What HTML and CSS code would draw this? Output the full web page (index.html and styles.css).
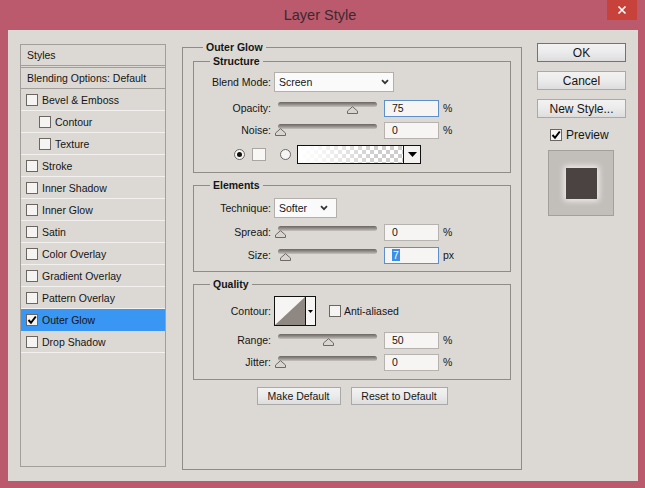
FILE: index.html
```html
<!DOCTYPE html>
<html lang="en">
<head>
<meta charset="utf-8">
<title>Layer Style</title>
<link rel="stylesheet" href="styles.css">
</head>
<body>
<div class="window">
  <div class="titlebar">
    <div class="title">Layer Style</div>
    <div class="close"><svg width="10" height="10" viewBox="0 0 10 10"><path d="M1.5 1.5 L8.5 8.5 M8.5 1.5 L1.5 8.5" stroke="#fff" stroke-width="1.6" fill="none"/></svg></div>
  </div>
  <div class="client">
    <div class="list">
      <div class="list-head">Styles</div>
      <div class="list-blend">Blending Options: Default</div>
      <div class="item"><span class="cb"></span>Bevel &amp; Emboss</div>
      <div class="item sub"><span class="cb"></span>Contour</div>
      <div class="item sub"><span class="cb"></span>Texture</div>
      <div class="item"><span class="cb"></span>Stroke</div>
      <div class="item"><span class="cb"></span>Inner Shadow</div>
      <div class="item"><span class="cb"></span>Inner Glow</div>
      <div class="item"><span class="cb"></span>Satin</div>
      <div class="item"><span class="cb"></span>Color Overlay</div>
      <div class="item"><span class="cb"></span>Gradient Overlay</div>
      <div class="item"><span class="cb"></span>Pattern Overlay</div>
      <div class="item selected"><span class="cb"><svg width="10" height="10" viewBox="0 0 10 10"><path d="M1.5 5 L4 7.8 L8.8 1.5" stroke="#000" stroke-width="2" fill="none"/></svg></span>Outer Glow</div>
      <div class="item"><span class="cb"></span>Drop Shadow</div>
    </div>

    <fieldset class="group main">
      <legend>Outer Glow</legend>

      <fieldset class="group inner structure">
        <legend>Structure</legend>
        <div class="row sel-row">
          <span class="lbl">Blend Mode:</span>
          <div class="select blend"><span>Screen</span><svg width="8" height="6" viewBox="0 0 8 6"><path d="M1 1.2 L4 4.2 L7 1.2" stroke="#333" stroke-width="1.7" fill="none"/></svg></div>
        </div>
        <div class="row sl-row r-opacity">
          <span class="lbl">Opacity:</span>
          <div class="slider"><div class="track"></div><svg class="thumb" style="left:69px" width="11" height="8" viewBox="0 0 11 8"><path d="M0.5 7.5 L0.5 5 L5.5 0.7 L10.5 5 L10.5 7.5 Z" fill="#d8d5d1" stroke="#6e6965"/></svg></div>
          <div class="field focus">75</div><span class="unit">%</span>
        </div>
        <div class="row sl-row r-noise">
          <span class="lbl">Noise:</span>
          <div class="slider"><div class="track"></div><svg class="thumb" style="left:-3px" width="11" height="8" viewBox="0 0 11 8"><path d="M0.5 7.5 L0.5 5 L5.5 0.7 L10.5 5 L10.5 7.5 Z" fill="#d8d5d1" stroke="#6e6965"/></svg></div>
          <div class="field">0</div><span class="unit">%</span>
        </div>
        <div class="row color-row">
          <span class="radio on"></span>
          <span class="swatch"></span>
          <span class="radio"></span>
          <div class="gradient"><div class="grad-fill"></div><div class="grad-arrow"><svg width="9" height="5" viewBox="0 0 9 5"><path d="M0 0 H9 L4.5 5 Z" fill="#000"/></svg></div></div>
        </div>
      </fieldset>

      <fieldset class="group inner elements">
        <legend>Elements</legend>
        <div class="row sel-row">
          <span class="lbl">Technique:</span>
          <div class="select technique"><span>Softer</span><svg width="8" height="6" viewBox="0 0 8 6"><path d="M1 1.2 L4 4.2 L7 1.2" stroke="#333" stroke-width="1.7" fill="none"/></svg></div>
        </div>
        <div class="row sl-row r-spread">
          <span class="lbl">Spread:</span>
          <div class="slider"><div class="track"></div><svg class="thumb" style="left:-3px" width="11" height="8" viewBox="0 0 11 8"><path d="M0.5 7.5 L0.5 5 L5.5 0.7 L10.5 5 L10.5 7.5 Z" fill="#d8d5d1" stroke="#6e6965"/></svg></div>
          <div class="field">0</div><span class="unit">%</span>
        </div>
        <div class="row sl-row r-size">
          <span class="lbl">Size:</span>
          <div class="slider"><div class="track"></div><svg class="thumb" style="left:2px" width="11" height="8" viewBox="0 0 11 8"><path d="M0.5 7.5 L0.5 5 L5.5 0.7 L10.5 5 L10.5 7.5 Z" fill="#d8d5d1" stroke="#6e6965"/></svg></div>
          <div class="field focus"><span class="hl">7</span></div><span class="unit">px</span>
        </div>
      </fieldset>

      <fieldset class="group inner quality">
        <legend>Quality</legend>
        <div class="row contour-row">
          <span class="lbl">Contour:</span>
          <div class="contour">
            <svg class="curve" width="30" height="28" viewBox="0 0 30 28" preserveAspectRatio="none"><rect width="30" height="28" fill="#f7f5f3"/><path d="M0 28 L30 0 L30 28 Z" fill="#8e8782"/></svg>
            <div class="contour-arrow"><svg width="5" height="3" viewBox="0 0 5 3"><path d="M0 0 H5 L2.5 3 Z" fill="#000"/></svg></div>
          </div>
          <span class="cb anti"></span><span class="anti-txt">Anti-aliased</span>
        </div>
        <div class="row sl-row r-range">
          <span class="lbl">Range:</span>
          <div class="slider"><div class="track"></div><svg class="thumb" style="left:45px" width="11" height="8" viewBox="0 0 11 8"><path d="M0.5 7.5 L0.5 5 L5.5 0.7 L10.5 5 L10.5 7.5 Z" fill="#d8d5d1" stroke="#6e6965"/></svg></div>
          <div class="field">50</div><span class="unit">%</span>
        </div>
        <div class="row sl-row r-jitter">
          <span class="lbl">Jitter:</span>
          <div class="slider"><div class="track"></div><svg class="thumb" style="left:-3px" width="11" height="8" viewBox="0 0 11 8"><path d="M0.5 7.5 L0.5 5 L5.5 0.7 L10.5 5 L10.5 7.5 Z" fill="#d8d5d1" stroke="#6e6965"/></svg></div>
          <div class="field">0</div><span class="unit">%</span>
        </div>
      </fieldset>

      <div class="defaults">
        <button class="btn make">Make Default</button>
        <button class="btn reset">Reset to Default</button>
      </div>
    </fieldset>

    <div class="side">
      <button class="btn side-btn ok">OK</button>
      <button class="btn side-btn">Cancel</button>
      <button class="btn side-btn">New Style...</button>
      <div class="preview-check"><span class="cb"><svg width="10" height="10" viewBox="0 0 10 10"><path d="M1.5 5 L4 7.8 L8.8 1.5" stroke="#000" stroke-width="2" fill="none"/></svg></span>Preview</div>
      <div class="preview"><div class="preview-sq"></div></div>
    </div>
  </div>
</div>
</body>
</html>
```

FILE: styles.css
```css
* { box-sizing: border-box; }

html, body {
  margin: 0;
  padding: 0;
}

body {
  width: 645px;
  height: 488px;
  overflow: hidden;
  background: #ba5a6c;
  font-family: "Liberation Sans", Arial, sans-serif;
  font-size: 10.5px;
  color: #151515;
}

.window {
  width: 645px;
  height: 488px;
  background: #ba5a6c;
  display: flex;
  flex-direction: column;
}

.titlebar {
  height: 30px;
  display: grid;
  grid-template-columns: 1fr auto 1fr;
  align-items: start;
  padding-right: 8px;
}

.title {
  grid-column: 2;
  font-size: 14.5px;
  line-height: 30px;
  color: #3d2830;
  padding-left: 3px;
}

.close {
  grid-column: 3;
  justify-self: end;
  width: 30px;
  height: 20px;
  background: #c7423b;
  display: flex;
  align-items: center;
  justify-content: center;
}

.close svg { display: block; }

.client {
  margin: 0 7px 0 8px;
  height: 451px;
  background: #dcd9d5;
  display: flex;
  align-items: flex-start;
  padding: 11px 0 0 12px;
}

/* ---------- left list ---------- */
.list {
  width: 146px;
  height: 423px;
  margin-top: 3px;
  border: 1px solid #a29e9a;
  flex: none;
}

.list-head {
  height: 23px;
  line-height: 20px;
  padding-left: 6px;
  border-bottom: 3px double #a29e9a;
}

.list-blend {
  height: 21px;
  line-height: 20px;
  padding-left: 6px;
  border-bottom: 1px solid #a29e9a;
}

.item {
  height: 22px;
  display: flex;
  align-items: center;
  padding-left: 5px;
  border-bottom: 1px solid #f3f1ef;
}

.item.sub { padding-left: 18px; }

.item.selected {
  background: #3a96f3;
  border-bottom-color: #3a96f3;
}

.cb {
  width: 12px;
  height: 12px;
  border: 1px solid #6b6662;
  background: #f5f4f2;
  margin-right: 4px;
  flex: none;
  display: flex;
  align-items: center;
  justify-content: center;
}

.cb svg { display: block; }

/* ---------- group boxes ---------- */
.group {
  margin: 0;
  padding: 0;
  min-width: 0;
  border: 1px solid #8f8b87;
}

.group > legend {
  font-weight: bold;
  line-height: 13px;
  padding: 0 3px;
}

.main {
  width: 340px;
  height: 429px;
  margin-left: 16px;
  padding: 0 10px;
  flex: none;
}

.main > legend { margin-left: 10px; }

.inner > legend { margin-left: 16px; }

.structure { margin-top: 1px; padding: 4px 0 8px; }
.elements { margin-top: 6px; padding: 6px 0 6px; }
.quality { margin-top: 6px; padding: 5px 0 7px; }

.row {
  display: flex;
  align-items: center;
  height: 20px;
}

.lbl {
  width: 77px;
  text-align: right;
  flex: none;
}

.select {
  margin-left: 3px;
  height: 20px;
  background: #fafafa;
  border: 1px solid #b3afab;
  display: flex;
  align-items: center;
  justify-content: space-between;
  padding: 0 4px 0 4px;
}

.select svg { display: block; }

.select.blend { width: 120px; }
.select.technique { width: 63px; padding-right: 8px; }

.slider {
  position: relative;
  width: 99px;
  height: 20px;
  margin-left: 7px;
  flex: none;
}

.track {
  margin-top: 4px;
  height: 5px;
  border-radius: 3px;
  background: linear-gradient(to bottom, #6a6561 0%, #8c8783 40%, #aca8a4 75%, #c6c2be 100%);
}

.thumb {
  position: absolute;
  top: 8px;
  display: block;
}

.field {
  margin-left: 7px;
  width: 55px;
  height: 17px;
  border: 1px solid #b6b3af;
  background: #f6f5f3;
  padding-left: 7px;
  line-height: 15px;
  flex: none;
}

.field.focus { border-color: #5d8fcd; }

.hl {
  background: #3a8fe6;
  color: #fff;
  padding: 0 1px;
}

.unit { margin-left: 4px; }

.r-opacity { margin-top: 6px; }
.r-noise { margin-top: 2px; }

.color-row {
  margin-top: 4px;
  padding-left: 40px;
}

.radio {
  width: 11px;
  height: 11px;
  border: 1px solid #6b6662;
  border-radius: 50%;
  background: #f7f6f4;
  flex: none;
  display: flex;
  align-items: center;
  justify-content: center;
}

.radio.on::after {
  content: "";
  width: 5px;
  height: 5px;
  border-radius: 50%;
  background: #111;
}

.swatch {
  width: 14px;
  height: 13px;
  margin: 0 14px 0 7px;
  border: 1px solid #a9a5a1;
  background: #f8f7f5;
  flex: none;
}

.gradient {
  margin-left: 6px;
  width: 124px;
  height: 19px;
  border: 1px solid #111;
  display: flex;
  flex: none;
}

.grad-fill {
  flex: 1;
  background:
    linear-gradient(to right, #ffffff 0%, rgba(255,255,255,0.85) 20%, rgba(255,255,255,0) 75%),
    repeating-conic-gradient(#cfcdcb 0 25%, #ffffff 0 50%) 0 0 / 8px 8px;
}

.grad-arrow {
  width: 17px;
  border-left: 1px solid #111;
  background: #f3f2f0;
  display: flex;
  align-items: center;
  justify-content: center;
}

.grad-arrow svg, .contour-arrow svg { display: block; }

.r-spread { margin-top: 4px; }
.r-size { margin-top: 3px; }

.contour-row { height: 30px; }

.contour {
  margin-left: 3px;
  width: 42px;
  height: 30px;
  border: 1px solid #111;
  display: flex;
  flex: none;
  background: #f7f5f3;
}

.curve {
  display: block;
  width: 30px;
  height: 28px;
}

.contour-arrow {
  flex: 1;
  border-left: 1px solid #111;
  display: flex;
  align-items: center;
  justify-content: center;
}

.cb.anti {
  margin-left: 13px;
  margin-right: 3px;
}

.r-range { margin-top: 4px; }
.r-jitter { margin-top: 2px; }

/* ---------- buttons ---------- */
.btn {
  font-family: "Liberation Sans", Arial, sans-serif;
  font-size: 10.5px;
  color: #151515;
  height: 18px;
  padding: 0;
  border: 1px solid #a9a9a9;
  border-radius: 0;
  background: linear-gradient(to bottom, #f2f2f2 0%, #ebebeb 50%, #dddddd 100%);
}

.defaults {
  display: flex;
  justify-content: center;
  gap: 10px;
  margin-top: 7px;
}

.btn.make { width: 84px; }
.btn.reset { width: 97px; }

.side {
  margin-left: 15px;
  margin-top: 2px;
  width: 89px;
  display: flex;
  flex-direction: column;
  flex: none;
}

.side-btn {
  width: 89px;
  height: 19px;
  font-size: 12px;
  margin-bottom: 9px;
}

.side-btn.ok { border-color: #3e80b8; }

.preview-check {
  display: flex;
  align-items: center;
  font-size: 12px;
  padding-left: 13px;
  margin-top: 1px;
  height: 14px;
}

.preview {
  margin: 8px 0 0 11px;
  width: 66px;
  height: 66px;
  border: 1px solid #a39f9b;
  background: #c2beba;
  display: flex;
  align-items: center;
  justify-content: center;
}

.preview-sq {
  width: 31px;
  height: 31px;
  background: #4b4341;
  box-shadow: 0 0 6px 2px rgba(255, 255, 255, 0.75);
}
```
